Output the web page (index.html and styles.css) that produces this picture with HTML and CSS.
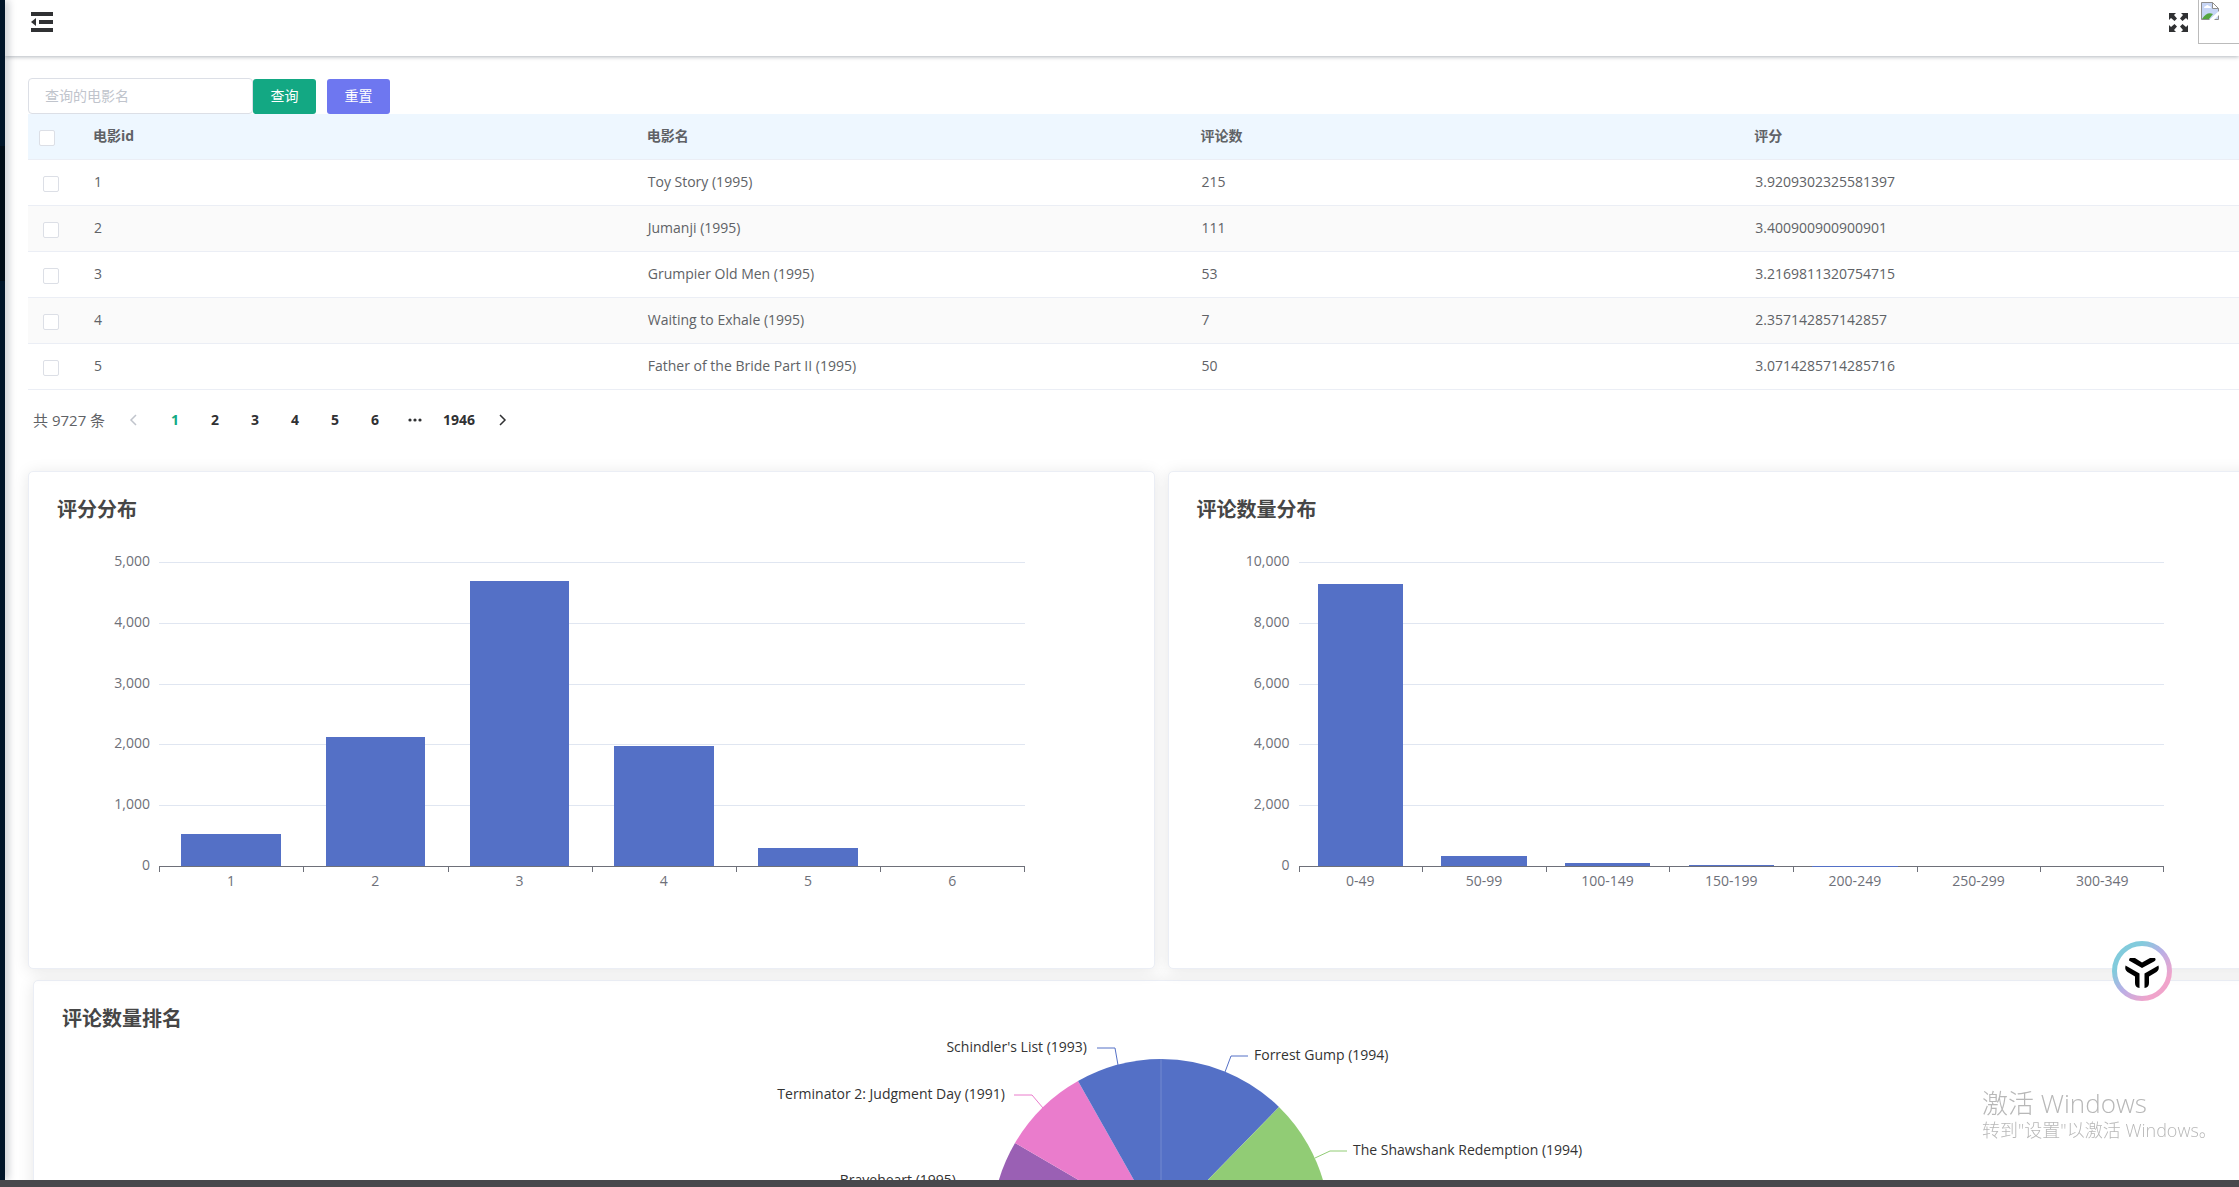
FILE: index.html
```html
<!DOCTYPE html>
<html lang="zh-CN">
<head>
<meta charset="utf-8">
<meta name="viewport" content="width=device-width, initial-scale=1">
<title>电影评分</title>
<link rel="stylesheet" href="styles.css">
</head>
<body>
<div class="app">
  <aside class="sidebar"><div class="sidebar-active"></div></aside>
  <div class="page">
    <header class="topbar">
      <button class="icon-button" type="button" aria-label="折叠菜单">
        <svg width="22" height="20" viewBox="0 0 22 20" fill="#303133"><path d="M0 0h22v4H0zM8 8h14v4H8zM0 16h22v4H0zM0 10l5-4v8z"/></svg>
      </button>
      <div class="topbar-right">
        <button class="icon-button" type="button" aria-label="全屏">
          <svg width="19" height="19" viewBox="0 0 19 19" fill="#303133"><path d="M0 0h7L5 2l3 3.500L5.500 8 2 5 0 7zM19 0h-7l2 2-3 3.500L13.500 8 17 5l2 2zM0 19h7l-2-2 3-3.500L5.500 11 2 14l-2-2zM19 19h-7l2-2-3-3.500 2.500-2.500 3.500 3 2-2z"/></svg>
        </button>
        <div class="avatar">
          <svg width="18" height="18" viewBox="0 0 18 18"><path d="M.5.5h11l6 6v11H.5z" fill="#c6d5f5" stroke="#8e8e8e"/><path d="M11.500.5v6h6z" fill="#fff" stroke="#8e8e8e"/><path d="M3 6q0-2 2-2 1-2 3 0 2 0 2 2z" fill="#fff"/><path d="M1 17q5-8 11-5l-4 5z" fill="#53a53f"/><path d="M8 18l10-9v4l-5 5z" fill="#fff"/></svg>
        </div>
      </div>
    </header>
    <main class="content">
      <form class="search">
        <input class="search-input" type="text" placeholder="查询的电影名" aria-label="查询的电影名">
        <button class="button button-query" type="button">查询</button>
        <button class="button button-reset" type="reset">重置</button>
      </form>
      <table class="movies">
        <thead>
          <tr><th class="pick"><input class="check" type="checkbox" aria-label="全选"></th><th>电影id</th><th>电影名</th><th>评论数</th><th>评分</th></tr>
        </thead>
        <tbody>
          <tr><td class="pick"><input class="check" type="checkbox" aria-label="选择 1"></td><td>1</td><td>Toy Story (1995)</td><td>215</td><td>3.9209302325581397</td></tr>
          <tr><td class="pick"><input class="check" type="checkbox" aria-label="选择 2"></td><td>2</td><td>Jumanji (1995)</td><td>111</td><td>3.400900900900901</td></tr>
          <tr><td class="pick"><input class="check" type="checkbox" aria-label="选择 3"></td><td>3</td><td>Grumpier Old Men (1995)</td><td>53</td><td>3.2169811320754715</td></tr>
          <tr><td class="pick"><input class="check" type="checkbox" aria-label="选择 4"></td><td>4</td><td>Waiting to Exhale (1995)</td><td>7</td><td>2.357142857142857</td></tr>
          <tr><td class="pick"><input class="check" type="checkbox" aria-label="选择 5"></td><td>5</td><td>Father of the Bride Part II (1995)</td><td>50</td><td>3.0714285714285716</td></tr>
        </tbody>
      </table>
      <nav class="pager" aria-label="分页">
        <span class="pager-total">共 9727 条</span>
        <button class="pager-item pager-prev" type="button" disabled aria-label="上一页"><svg width="8" height="12" viewBox="0 0 8 12" fill="none" stroke="#c0c4cc" stroke-width="1.500"><path d="M7 1L2 6l5 5"/></svg></button>
        <button class="pager-item pager-current" type="button">1</button>
        <button class="pager-item" type="button">2</button>
        <button class="pager-item" type="button">3</button>
        <button class="pager-item" type="button">4</button>
        <button class="pager-item" type="button">5</button>
        <button class="pager-item" type="button">6</button>
        <button class="pager-item" type="button" aria-label="更多"><svg width="14" height="4" viewBox="0 0 14 4" fill="#303133"><circle cx="2" cy="2" r="1.600"/><circle cx="7" cy="2" r="1.600"/><circle cx="12" cy="2" r="1.600"/></svg></button>
        <button class="pager-item pager-last" type="button">1946</button>
        <button class="pager-item" type="button" aria-label="下一页"><svg width="8" height="12" viewBox="0 0 8 12" fill="none" stroke="#303133" stroke-width="1.500"><path d="M1 1l5 5-5 5"/></svg></button>
      </nav>
      <div class="cards">
        <section class="card">
          <h2 class="card-title">评分分布</h2>
          <div class="chart">
            <div class="y-axis"><span>5,000</span><span>4,000</span><span>3,000</span><span>2,000</span><span>1,000</span><span>0</span></div>
            <div class="plot">
              <div class="lines"><i></i><i></i><i></i><i></i><i></i></div>
              <div class="bars">
                <div class="band"><div class="bar" style="height:10.6%"></div></div>
                <div class="band"><div class="bar" style="height:42.4%"></div></div>
                <div class="band"><div class="bar" style="height:93.7%"></div></div>
                <div class="band"><div class="bar" style="height:39.4%"></div></div>
                <div class="band"><div class="bar" style="height:5.8%"></div></div>
                <div class="band"></div>
              </div>
            </div>
            <div class="x-axis"><span>1</span><span>2</span><span>3</span><span>4</span><span>5</span><span>6</span></div>
          </div>
        </section>
        <section class="card">
          <h2 class="card-title">评论数量分布</h2>
          <div class="chart">
            <div class="y-axis"><span>10,000</span><span>8,000</span><span>6,000</span><span>4,000</span><span>2,000</span><span>0</span></div>
            <div class="plot">
              <div class="lines"><i></i><i></i><i></i><i></i><i></i></div>
              <div class="bars">
                <div class="band"><div class="bar" style="height:92.7%"></div></div>
                <div class="band"><div class="bar" style="height:3.2%"></div></div>
                <div class="band"><div class="bar" style="height:1.1%"></div></div>
                <div class="band"><div class="bar" style="height:0.4%"></div></div>
                <div class="band"><div class="bar" style="height:0.1%"></div></div>
                <div class="band"></div>
                <div class="band"></div>
              </div>
            </div>
            <div class="x-axis"><span>0-49</span><span>50-99</span><span>100-149</span><span>150-199</span><span>200-249</span><span>250-299</span><span>300-349</span></div>
          </div>
        </section>
      </div>
      <section class="card card-rank">
        <h2 class="card-title">评论数量排名</h2>
        <svg class="pie" width="1000" height="420" viewBox="-500 -209 1000 420">
          <path d="M0 0V-169A169 169 0 0 1 118-121z" fill="#5470c6"/>
          <path d="M0 0L118-121A169 169 0 0 1 160 54z" fill="#91cc75"/>
          <path d="M0 0L-168 17A169 169 0 0 1-146-85z" fill="#9a60b4"/>
          <path d="M0 0L-146-85A169 169 0 0 1-83-147z" fill="#ea7ccc"/>
          <path d="M0 0L-83-147A169 169 0 0 1 0-169z" fill="#5470c6"/>
          <path d="M0 0V-169" stroke="#7389cf"/>
          <g fill="none">
            <path d="M64-156L70-172H87M-43-163L-46-180H-64" stroke="#5470c6"/>
            <path d="M154-70L169-77H186" stroke="#91cc75"/>
            <path d="M-118-120L-129-133H-147" stroke="#ea7ccc"/>
          </g>
          <g class="pie-labels">
            <text x="93" y="-168">Forrest Gump (1994)</text>
            <text x="192" y="-73">The Shawshank Redemption (1994)</text>
            <g text-anchor="end">
              <text x="-74" y="-176">Schindler's List (1993)</text>
              <text x="-156" y="-129">Terminator 2: Judgment Day (1991)</text>
              <text x="-205" y="-43">Braveheart (1995)</text>
            </g>
          </g>
        </svg>
      </section>
    </main>
  </div>
</div>
<footer class="bottom-bar"></footer>
<button class="assistant" type="button" aria-label="助手">
  <svg width="60" height="60" viewBox="0 0 60 60">
    <defs><linearGradient id="ring" x1="0" y1="0" x2="1" y2="1"><stop offset="0.250" stop-color="#82cbdc"/><stop offset="0.500" stop-color="#b9afe6"/><stop offset="0.800" stop-color="#f0a4cb"/></linearGradient></defs>
    <circle cx="30" cy="30" r="27.500" fill="#fff" stroke="url(#ring)" stroke-width="5"/>
    <g fill="#000">
      <path d="M18 17h5l7 4.500 8-4.500h5q1.500 2-1 3.500L30 27l-13-7.500q0-2 1-2.500z"/>
      <path d="M13.500 24.500l14 8V47q-4.500-.5-4.500-5v-6.500l-7.500-4.500q-3-2-2-6.500z"/>
      <path d="M46.500 24.500l-14 8V47q4.500-.5 4.500-5v-6.500l7.500-4.500q3-2 2-6.500z"/>
    </g>
  </svg>
</button>
<div class="watermark"><p class="watermark-title">激活 Windows</p><p class="watermark-text">转到"设置"以激活 Windows。</p></div>
</body>
</html>
```
FILE: styles.css
```css
* { box-sizing: border-box; }
body {
  margin: 0;
  height: 100vh;
  display: flex;
  flex-direction: column;
  overflow: hidden;
  background: #fff;
  color: #606266;
  font: 14px/20px "Open Sans", "Noto Sans CJK SC", sans-serif;
}
button, input { font: inherit; }
button { padding: 0; border: 0; background: none; color: inherit; }
.app { flex: 1; min-height: 0; display: flex; overflow: hidden; }
.sidebar {
  flex: none;
  width: 5px;
  padding-top: 146px;
  background: #001529;
  box-shadow: 2px 0 8px rgba(0, 21, 41, .35);
  z-index: 1;
}
.sidebar-active { height: 135px; background: #000c17; }
.page { flex: 1; min-width: 0; }
.topbar {
  height: 56px;
  display: flex;
  justify-content: space-between;
  align-items: flex-start;
  padding-left: 26px;
  box-shadow: 0 1px 4px rgba(0, 21, 41, .3);
}
.topbar-right { display: flex; gap: 10px; }
.icon-button { height: 44px; display: flex; align-items: center; }
.avatar { width: 41px; height: 44px; padding: 2px; border: 1px solid #bbb; border-width: 0 0 1px 1px; }

/* The content is wider than the window and runs past its right edge. */
.content { margin-right: -55px; padding: 22px 0 0 23px; }
.search { display: flex; align-items: flex-end; }
.search-input {
  width: 225px;
  height: 36px;
  padding: 0 16px 2px;
  border: 1px solid #dcdfe6;
  border-radius: 4px;
  background: #fff;
}
.search-input::placeholder { color: #c0c4cc; opacity: 1; }
.button { width: 63px; height: 35px; padding-bottom: 2px; border-radius: 3px; color: #fff; }
.button-query { background: #13a883; }
.button-reset { margin-left: 11px; background: #6e77f0; }

.movies { width: 100%; table-layout: fixed; border-collapse: separate; border-spacing: 0; }
.movies th, .movies td {
  height: 46px;
  padding: 0 15px 2px;
  text-align: left;
  border-bottom: 1px solid #ebeef5;
}
.movies th { padding-left: 14px; background: #eef7ff; font-weight: 700; }
.movies tbody tr:nth-child(even) { background: #fafafa; }
.movies .pick { width: 51px; padding-bottom: 0; }
.movies th.pick { padding-left: 11px; }
.check {
  appearance: none;
  display: block;
  width: 16px;
  height: 16px;
  margin: 2px 0 0;
  border: 1px solid #dcdfe6;
  border-radius: 2px;
  background: #fff;
}

.pager { display: flex; align-items: center; height: 36px; margin: 12px 0 33px; padding-left: 5px; }
.pager-total { width: 78px; font-size: 15px; }
.pager-item {
  width: 40px;
  height: 36px;
  display: flex;
  justify-content: center;
  align-items: center;
  color: #303133;
  font-weight: 700;
}
.pager-prev { width: 44px; }
.pager-current { color: #13a883; }
.pager-last { width: 48px; }

.cards { display: grid; grid-template-columns: 1fr 1fr; gap: 13px; }
.card {
  min-height: 498px;
  padding: 25px 28px;
  border: 1px solid #ebeef5;
  border-radius: 5px;
  background: #fff;
  box-shadow: 0 2px 16px rgba(0, 0, 0, .1);
}
.card-title { margin: 0; color: #464646; font-size: 20px; line-height: 26px; }
.chart {
  display: grid;
  grid-template-columns: 93px 1fr;
  column-gap: 9px;
  margin: 39px 101px 0 0;
  color: #6e7079;
}
.y-axis {
  height: 324px;
  margin-top: -11px;
  display: flex;
  flex-direction: column;
  justify-content: space-between;
  text-align: right;
}
.plot { display: grid; height: 305px; border-bottom: 1px solid #6e7079; }
.lines, .bars { grid-area: 1 / 1; }
.lines { display: grid; grid-template-rows: repeat(5, 1fr); }
.lines i { border-top: 1px solid #e0e6f1; }
.bars, .x-axis { display: grid; grid-auto-flow: column; grid-auto-columns: 1fr; }
.band { display: flex; flex-direction: column; justify-content: flex-end; align-items: center; }
.bar { width: 69%; background: #5470c6; }
.x-axis { grid-column: 2; margin-top: -8px; text-align: center; }
.x-axis span { padding-top: 4px; background: linear-gradient(#6e7079, #6e7079) no-repeat; background-size: 1px 5px; }
.x-axis span:last-child {
  background: linear-gradient(#6e7079, #6e7079) left top / 1px 5px no-repeat, linear-gradient(#6e7079, #6e7079) right top / 1px 5px no-repeat;
}
.card-rank { margin: 11px 5px 0; }
.pie { display: block; margin: -13px auto 0; }
.pie-labels { fill: #333; }

.bottom-bar { flex: none; height: 7px; background: #48484c; z-index: 2; }
.assistant { position: fixed; right: 67px; bottom: 186px; width: 60px; height: 60px; }
.watermark { position: fixed; right: 11px; bottom: 45px; width: 246px; color: #b8b8b8; font-weight: 300; }
.watermark p { margin: 0; white-space: nowrap; }
.watermark-title { font-size: 26px; line-height: 30px; }
.watermark-text { font-size: 18px; line-height: 24px; }
```
